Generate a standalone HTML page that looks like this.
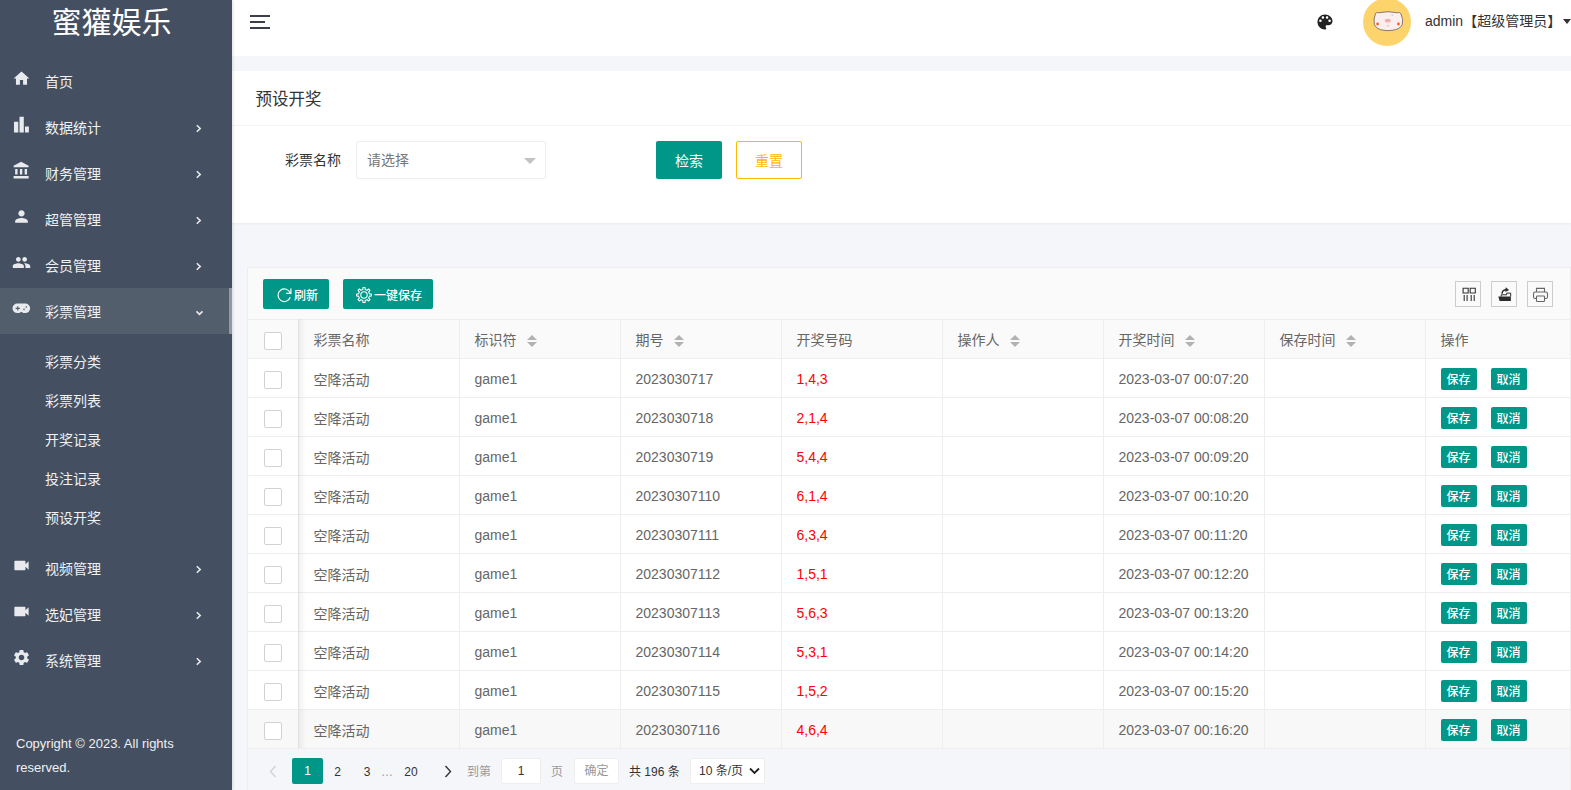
<!DOCTYPE html>
<html lang="zh-CN">
<head>
<meta charset="utf-8">
<title>预设开奖</title>
<style>
*{box-sizing:border-box;margin:0;padding:0}
html,body{width:1571px;height:790px;overflow:hidden}
body{font-family:"Liberation Sans","Noto Sans CJK SC",sans-serif;font-size:14px;color:#666;background:#f5f6fa;position:relative}
.abs{position:absolute}
/* sidebar */
#side{position:absolute;left:0;top:0;width:232px;height:790px;background:#445061;color:#fff;box-shadow:1px 0 3px rgba(0,0,0,.12);z-index:5}
#logo{position:absolute;left:0;top:3px;width:223px;height:44px;line-height:40px;text-align:center;font-size:30px;font-weight:400;color:#fff;letter-spacing:0}
.mi{position:absolute;left:0;width:232px;height:46px;line-height:46px;color:#f0f1f3;font-size:14px}
.mi .t{position:absolute;left:45px;top:1px}
.mi svg.ic{position:absolute;left:12px;top:10.6px;width:19px;height:19px;fill:#e8eaed}
#thumb{position:absolute;left:229px;top:288px;width:3px;height:46px;background:#9099a5}
.mi svg.ar{position:absolute;left:195px;top:20px;width:8px;height:9px}
.mi.on{background:#535e6d;width:229px}
.sub{position:absolute;left:45px;height:39px;line-height:39px;color:#f0f1f3;font-size:14px}
#copy{position:absolute;left:16px;top:732px;width:200px;color:#f0f1f3;font-size:13px;line-height:23.500px}
/* header */
#hd{position:absolute;left:232px;top:0;width:1339px;height:56px;background:#fff}
/* card */
#card{position:absolute;left:232px;top:71px;width:1339px;height:152px;background:#fff;box-shadow:0 1px 2px 0 rgba(0,0,0,.05)}
#ctitle{position:absolute;left:23.500px;top:14px;font-size:16.500px;color:#333;line-height:28px}
#cline{position:absolute;left:0;top:54px;width:1339px;height:1px;background:#f4f4f4}
.btn{position:absolute;height:38px;line-height:40px;text-align:center;font-size:14px;border-radius:2px;color:#fff;background:#009688}
/* table */
#tb{position:absolute;left:247px;top:267px;width:1324px;height:524px;background:#fafafa;border:1px solid #eee;overflow:hidden}
.sbtn{position:absolute;top:11px;height:30px;line-height:30px;color:#fff;background:#009688;border-radius:2px;font-size:12px;font-weight:500}
.tool{position:absolute;top:13px;width:26px;height:26px}
.tool svg{position:absolute;left:0;top:0;width:26px;height:26px}
table{border-collapse:collapse;position:absolute;left:0;top:51px;table-layout:fixed;width:1323px;background:#fff}
th,td{height:39px;border:1px solid #eee;padding:0 15px;text-align:left;font-weight:400;font-size:14px;color:#666;white-space:nowrap;overflow:hidden}
th{background:#fafafa}
th:first-child,td:first-child{border-left:none;padding:0}
th:last-child,td:last-child{border-right:none}
td{padding-top:1px}
td.r{color:#f00}
.cb{display:block;width:18px;height:18px;border:1px solid #d2d2d2;border-radius:2px;background:#fff;margin-left:16px;position:relative;top:1.500px}
.so{display:inline-block;position:relative;width:10px;height:14px;margin-left:10px;vertical-align:-3px}
.so:before{content:"";position:absolute;left:0;top:1px;border:5px solid transparent;border-top:none;border-bottom:5px solid #b2b2b2}
.so:after{content:"";position:absolute;left:0;top:8px;border:5px solid transparent;border-bottom:none;border-top:5px solid #b2b2b2}
.ob{font-weight:500;display:inline-block;height:22px;line-height:24px;padding:0 6px;background:#009688;color:#fff;font-size:12px;border-radius:2px;margin-right:14px;vertical-align:middle;position:relative;top:.5px}
tr.hv td{background:#f8f8f8}
.shl{position:absolute;left:50px;top:51px;width:8px;height:429px;background:linear-gradient(to right,rgba(0,0,0,.06),rgba(0,0,0,0))}
.shr{position:absolute;left:1169px;top:51px;width:8px;height:429px;background:linear-gradient(to left,rgba(0,0,0,.06),rgba(0,0,0,0))}
/* pager */
#pg{position:absolute;left:0;top:481px;width:1324px;height:42px;font-size:12px;color:#333;background:#f5f6fa}
#pg .p{position:absolute;top:10px;height:26px;line-height:26px;text-align:center}
</style>
</head>
<body>
<div id="side">
  <div id="logo">蜜獾娱乐</div>
  <div class="mi" style="top:58px"><svg class="ic" viewBox="0 0 24 24"><path d="M10 20v-6h4v6h5v-8h3L12 3 2 12h3v8z"/></svg><span class="t">首页</span></div>
  <div class="mi" style="top:104px"><svg class="ic" viewBox="0 0 24 24"><path d="M2.500 8.400h5.400V22H2.500zM9.500 2.300h5.400V22H9.500zM16.400 14.400h4.900V22h-4.900z"/></svg><span class="t">数据统计</span><svg class="ar" viewBox="0 0 8 9"><path d="M1.800 1.200 5.200 4.500 1.800 7.800" fill="none" stroke="#e8eaed" stroke-width="1.600"/></svg></div>
  <div class="mi" style="top:150px"><svg class="ic" viewBox="0 0 24 24"><path d="M4 10v7h3v-7H4zm6 0v7h3v-7h-3zM2 22h19v-3H2v3zm14-12v7h3v-7h-3zm-4.500-9L2 6v2h19V6l-9.500-5z"/></svg><span class="t">财务管理</span><svg class="ar" viewBox="0 0 8 9"><path d="M1.800 1.200 5.200 4.500 1.800 7.800" fill="none" stroke="#e8eaed" stroke-width="1.600"/></svg></div>
  <div class="mi" style="top:196px"><svg class="ic" viewBox="0 0 24 24"><path d="M12 12c2.210 0 4-1.790 4-4s-1.790-4-4-4-4 1.790-4 4 1.790 4 4 4zm0 2c-2.670 0-8 1.340-8 4v2h16v-2c0-2.660-5.330-4-8-4z"/></svg><span class="t">超管管理</span><svg class="ar" viewBox="0 0 8 9"><path d="M1.800 1.200 5.200 4.500 1.800 7.800" fill="none" stroke="#e8eaed" stroke-width="1.600"/></svg></div>
  <div class="mi" style="top:242px"><svg class="ic" viewBox="0 0 24 24"><path d="M16 11c1.660 0 2.990-1.340 2.990-3S17.660 5 16 5c-1.660 0-3 1.340-3 3s1.340 3 3 3zm-8 0c1.660 0 2.990-1.340 2.990-3S9.660 5 8 5C6.340 5 5 6.340 5 8s1.340 3 3 3zm0 2c-2.330 0-7 1.170-7 3.500V19h14v-2.500c0-2.330-4.670-3.500-7-3.500zm8 0c-.290 0-.620.020-.970.050 1.160.840 1.970 1.970 1.970 3.450V19h6v-2.500c0-2.330-4.670-3.500-7-3.500z"/></svg><span class="t">会员管理</span><svg class="ar" viewBox="0 0 8 9"><path d="M1.800 1.200 5.200 4.500 1.800 7.800" fill="none" stroke="#e8eaed" stroke-width="1.600"/></svg></div>
  <div class="mi on" style="top:288px"><svg class="ic" viewBox="0 0 24 24"><path fill-rule="evenodd" d="M6.600 5.800H16.900A6 6 0 0 1 16.900 17.800H14.300Q11.800 14.800 9.300 17.800H6.600A6 6 0 0 1 6.600 5.800zM6.550 9.300h1.400v1.900h2v1.400h-2v1.900h-1.400v-1.900h-2v-1.400h2zM15.200 12a1.050 1.050 0 1 0 0 2.100 1.050 1.050 0 1 0 0-2.100zM18.100 9.100a1.050 1.050 0 1 0 0 2.100 1.050 1.050 0 1 0 0-2.100z"/></svg><span class="t">彩票管理</span><svg class="ar" style="left:195px;top:21px;width:9px;height:7px" viewBox="0 0 9 7"><path d="M1.500 2.400 4.500 5.400 7.500 2.400" fill="none" stroke="#e8eaed" stroke-width="1.600"/></svg></div>
  <div class="mi" style="top:545px"><svg class="ic" viewBox="0 0 24 24"><path d="M17 10.500V7c0-.550-.450-1-1-1H4c-.550 0-1 .450-1 1v10c0 .550.450 1 1 1h12c.550 0 1-.450 1-1v-3.500l4 4v-11l-4 4z"/></svg><span class="t">视频管理</span><svg class="ar" viewBox="0 0 8 9"><path d="M1.800 1.200 5.200 4.500 1.800 7.800" fill="none" stroke="#e8eaed" stroke-width="1.600"/></svg></div>
  <div class="mi" style="top:591px"><svg class="ic" viewBox="0 0 24 24"><path d="M17 10.500V7c0-.550-.450-1-1-1H4c-.550 0-1 .450-1 1v10c0 .550.450 1 1 1h12c.550 0 1-.450 1-1v-3.500l4 4v-11l-4 4z"/></svg><span class="t">选妃管理</span><svg class="ar" viewBox="0 0 8 9"><path d="M1.800 1.200 5.200 4.500 1.800 7.800" fill="none" stroke="#e8eaed" stroke-width="1.600"/></svg></div>
  <div class="mi" style="top:637px"><svg class="ic" viewBox="0 0 24 24"><path d="M19.140 12.940c.040-.300.060-.610.060-.940 0-.320-.020-.640-.070-.940l2.030-1.580c.180-.140.230-.410.120-.610l-1.920-3.320c-.120-.220-.370-.290-.590-.220l-2.390.960c-.500-.380-1.030-.700-1.620-.940l-.360-2.540c-.040-.240-.240-.410-.480-.410h-3.840c-.240 0-.430.170-.470.410l-.360 2.540c-.590.240-1.130.570-1.620.940l-2.390-.960c-.220-.080-.470 0-.590.220L2.740 8.870c-.120.210-.080.470.120.610l2.030 1.580c-.050.300-.090.630-.090.940s.020.640.070.940l-2.030 1.580c-.180.140-.230.410-.120.610l1.920 3.320c.120.220.370.290.590.220l2.390-.960c.500.380 1.030.700 1.620.940l.360 2.540c.050.240.240.410.480.410h3.840c.240 0 .440-.170.470-.410l.360-2.540c.590-.240 1.130-.560 1.620-.940l2.390.960c.220.080.470 0 .590-.220l1.920-3.320c.120-.220.070-.470-.120-.610l-2.010-1.580zM12 15.600c-1.980 0-3.600-1.620-3.600-3.600s1.620-3.600 3.600-3.600 3.600 1.620 3.600 3.600-1.620 3.600-3.600 3.600z"/></svg><span class="t">系统管理</span><svg class="ar" viewBox="0 0 8 9"><path d="M1.800 1.200 5.200 4.500 1.800 7.800" fill="none" stroke="#e8eaed" stroke-width="1.600"/></svg></div>
  <div class="sub" style="top:343px">彩票分类</div>
  <div class="sub" style="top:382px">彩票列表</div>
  <div class="sub" style="top:421px">开奖记录</div>
  <div class="sub" style="top:460px">投注记录</div>
  <div class="sub" style="top:499px">预设开奖</div>
  <div id="thumb"></div>
  <div id="copy">Copyright © 2023. All rights reserved.</div>
</div>
<div id="hd">
  <svg class="abs" style="left:18px;top:14px;width:20px;height:16px" viewBox="0 0 20 16"><path d="M0 2h20M0 8h15M0 14h20" stroke="#3a3f4a" stroke-width="2" fill="none"/></svg>
  <svg class="abs" style="left:1083px;top:12px;width:20px;height:20px" viewBox="0 0 24 24"><path fill="#222" d="M12 3c-4.970 0-9 4.030-9 9s4.030 9 9 9c.830 0 1.500-.670 1.500-1.500 0-.390-.150-.740-.390-1.010-.230-.260-.380-.610-.380-.990 0-.830.670-1.500 1.500-1.500H16c2.760 0 5-2.240 5-5 0-4.420-4.030-8-9-8zm-5.500 9c-.830 0-1.500-.670-1.500-1.500S5.670 9 6.500 9 8 9.670 8 10.500 7.330 12 6.500 12zm3-4C8.670 8 8 7.330 8 6.500S8.670 5 9.500 5s1.500.670 1.500 1.500S10.330 8 9.500 8zm5 0c-.830 0-1.500-.670-1.500-1.500S13.670 5 14.500 5s1.500.670 1.500 1.500S15.330 8 14.500 8zm3 4c-.830 0-1.500-.670-1.500-1.500S16.670 9 17.500 9s1.500.670 1.500 1.500-.670 1.500-1.500 1.500z"/></svg>
  <div class="abs" id="av" style="left:1131px;top:-2px;width:48px;height:48px;border-radius:50%;background:#fdd46c;overflow:hidden">
    <svg style="position:absolute;left:8.500px;top:13px;width:32px;height:21px" viewBox="0 0 32 21"><path d="M3.500 2.500Q4.500 .8 6.600 1.800Q16 -.4 25.500 1.800Q28 .8 29 2.800Q31.600 9 30.300 13.500Q28 18.500 20 19.300Q16 20 12 19.300Q4.500 18.500 2.300 13.500Q1.400 8 3.500 2.500z" fill="#fbeeee" stroke="#5c4a48" stroke-width=".7"/><circle cx="5.600" cy="13" r="1.400" fill="#ff5a2a"/><circle cx="26.400" cy="13" r="1.400" fill="#ff5a2a"/><ellipse cx="15.800" cy="9.700" rx="3" ry="1.900" fill="#f4b3b3"/><path d="M14.300 9.300h1M16.500 9.300h1" stroke="#c98" stroke-width=".7"/><path d="M15.300 14.500q.6 1.600 1 0" stroke="#8a7472" stroke-width=".6" fill="none"/><path d="M20.200 3.600v1.200" stroke="#8a7472" stroke-width=".5"/></svg>
  </div>
  <div class="abs" style="left:1193px;top:10px;line-height:22px;font-size:14px;color:#333;white-space:nowrap">admin【超级管理员】</div>
  <div class="abs" style="left:1331px;top:19px;width:0;height:0;border:4px solid transparent;border-top:5px solid #333;border-bottom:none"></div>
</div>
<div id="card">
  <div id="ctitle">预设开奖</div>
  <div id="cline"></div>
  <div class="abs" style="left:53px;top:70px;line-height:38px;color:#333;font-size:14px">彩票名称</div>
  <div class="abs" style="left:124px;top:70px;width:190px;height:38px;border:1px solid #eee;border-radius:2px;line-height:36px;padding-left:10px;color:#777;font-size:14px">请选择<span class="abs" style="right:9px;top:16px;width:0;height:0;border:6px solid transparent;border-top:6px solid #c2c2c2;border-bottom:none"></span></div>
  <div class="btn" style="left:424px;top:70px;width:66px">检索</div>
  <div class="btn" style="left:504px;top:70px;width:66px;background:#fff;border:1px solid #ffb800;color:#ffb800;line-height:38px">重置</div>
</div>
<div id="tb">
<div class="sbtn" style="left:15px;width:66px"><svg class="abs" style="left:13px;top:8px;width:16px;height:16px" viewBox="0 0 16 16"><path d="M14.300 6.300A6.300 6.300 0 1 0 14.300 10.300" fill="none" stroke="#fff" stroke-width="1.200"/><path d="M14.900 1.600v4.700h-4.700" fill="none" stroke="#fff" stroke-width="1.200"/></svg><span class="abs" style="left:31px;top:1.500px">刷新</span></div>
<div class="sbtn" style="left:95px;width:90px"><svg class="abs" style="left:13px;top:8px;width:16px;height:16px" viewBox="0 0 16 16"><path d="M6.86 2.52 L6.94 0.57 L9.06 0.57 L9.14 2.52 L11.07 3.32 L12.50 2.00 L14.00 3.50 L12.68 4.93 L13.48 6.86 L15.43 6.94 L15.43 9.06 L13.48 9.14 L12.68 11.07 L14.00 12.50 L12.50 14.00 L11.07 12.68 L9.14 13.48 L9.06 15.43 L6.94 15.43 L6.86 13.48 L4.93 12.68 L3.50 14.00 L2.00 12.50 L3.32 11.07 L2.52 9.14 L0.57 9.06 L0.57 6.94 L2.52 6.86 L3.32 4.93 L2.00 3.50 L3.50 2.00 L4.93 3.32z" fill="none" stroke="#fff" stroke-width="1.100" stroke-linejoin="round"/><circle cx="8" cy="8" r="3.200" fill="none" stroke="#fff" stroke-width="1.100"/></svg><span class="abs" style="left:31px;top:1.500px">一键保存</span></div>
<div class="tool" style="left:1207px"><svg viewBox="0 0 26 26"><rect x=".5" y=".5" width="25" height="25" fill="none" stroke="#ccc"/><path d="M8.100 7.300h5.100v4.700H8.100zM15.200 7.300h5.100v4.700h-5.100z" fill="none" stroke="#333" stroke-width="1.100"/><path d="M9.200 13.900v6M12.100 13.900v6M16.200 13.900v6M19.200 13.900v6" stroke="#333" stroke-width="1.100"/></svg></div>
<div class="tool" style="left:1243px"><svg viewBox="0 0 26 26"><rect x=".5" y=".5" width="25" height="25" fill="none" stroke="#ccc"/><path d="M7.300 15.600h12.600v4.300H8.600z" fill="#2b2b2b"/><path d="M10.200 15.600v-1.800h5.500v-1.700h4v3.500" fill="none" stroke="#2b2b2b" stroke-width="1"/><path d="M11 12.700c.2-2.800 2-4 4.300-4" fill="none" stroke="#2b2b2b" stroke-width="1.500"/><path d="M14.600 6.200l3.500 2.700-3.700 2z" fill="#2b2b2b"/></svg></div>
<div class="tool" style="left:1279px"><svg viewBox="0 0 26 26"><rect x=".5" y=".5" width="25" height="25" fill="none" stroke="#ccc"/><path d="M9.500 11V7.400h8V11M9.500 17.500H8.300a1.800 1.800 0 0 1-1.800-1.800v-2.900a1.800 1.800 0 0 1 1.800-1.800h10.400a1.800 1.800 0 0 1 1.800 1.800v2.900a1.800 1.800 0 0 1-1.800 1.800H17.500" fill="none" stroke="#666" stroke-width="1.100"/><rect x="9.500" y="15" width="8" height="5.500" rx=".8" fill="none" stroke="#666" stroke-width="1.100"/></svg></div>
<table><colgroup><col style="width:50px"><col style="width:161px"><col style="width:161px"><col style="width:161px"><col style="width:161px"><col style="width:161px"><col style="width:161px"><col style="width:161px"><col></colgroup>
<tr><th><span class="cb"></span></th><th>彩票名称</th><th>标识符<span class="so"></span></th><th>期号<span class="so"></span></th><th>开奖号码</th><th>操作人<span class="so"></span></th><th>开奖时间<span class="so"></span></th><th>保存时间<span class="so"></span></th><th>操作</th></tr>
<tr><td><span class="cb"></span></td><td>空降活动</td><td>game1</td><td>2023030717</td><td class="r">1,4,3</td><td></td><td>2023-03-07 00:07:20</td><td></td><td><span class="ob">保存</span><span class="ob">取消</span></td></tr>
<tr><td><span class="cb"></span></td><td>空降活动</td><td>game1</td><td>2023030718</td><td class="r">2,1,4</td><td></td><td>2023-03-07 00:08:20</td><td></td><td><span class="ob">保存</span><span class="ob">取消</span></td></tr>
<tr><td><span class="cb"></span></td><td>空降活动</td><td>game1</td><td>2023030719</td><td class="r">5,4,4</td><td></td><td>2023-03-07 00:09:20</td><td></td><td><span class="ob">保存</span><span class="ob">取消</span></td></tr>
<tr><td><span class="cb"></span></td><td>空降活动</td><td>game1</td><td>20230307110</td><td class="r">6,1,4</td><td></td><td>2023-03-07 00:10:20</td><td></td><td><span class="ob">保存</span><span class="ob">取消</span></td></tr>
<tr><td><span class="cb"></span></td><td>空降活动</td><td>game1</td><td>20230307111</td><td class="r">6,3,4</td><td></td><td>2023-03-07 00:11:20</td><td></td><td><span class="ob">保存</span><span class="ob">取消</span></td></tr>
<tr><td><span class="cb"></span></td><td>空降活动</td><td>game1</td><td>20230307112</td><td class="r">1,5,1</td><td></td><td>2023-03-07 00:12:20</td><td></td><td><span class="ob">保存</span><span class="ob">取消</span></td></tr>
<tr><td><span class="cb"></span></td><td>空降活动</td><td>game1</td><td>20230307113</td><td class="r">5,6,3</td><td></td><td>2023-03-07 00:13:20</td><td></td><td><span class="ob">保存</span><span class="ob">取消</span></td></tr>
<tr><td><span class="cb"></span></td><td>空降活动</td><td>game1</td><td>20230307114</td><td class="r">5,3,1</td><td></td><td>2023-03-07 00:14:20</td><td></td><td><span class="ob">保存</span><span class="ob">取消</span></td></tr>
<tr><td><span class="cb"></span></td><td>空降活动</td><td>game1</td><td>20230307115</td><td class="r">1,5,2</td><td></td><td>2023-03-07 00:15:20</td><td></td><td><span class="ob">保存</span><span class="ob">取消</span></td></tr>
<tr class="hv"><td><span class="cb"></span></td><td>空降活动</td><td>game1</td><td>20230307116</td><td class="r">4,6,4</td><td></td><td>2023-03-07 00:16:20</td><td></td><td><span class="ob">保存</span><span class="ob">取消</span></td></tr>
</table>
<div class="shl"></div>
<div id="pg">
<svg class="abs" style="left:21px;top:16px;width:8px;height:13px" viewBox="0 0 8 13"><path d="M6.500 1 1.500 6.500 6.500 12" fill="none" stroke="#d2d2d2" stroke-width="1.400"/></svg>
<div class="p" style="left:44px;top:9px;width:31px;background:#009688;color:#fff;border-radius:2px">1</div>
<div class="p" style="left:75px;width:29px">2</div>
<div class="p" style="left:104px;width:30px">3</div>
<div class="p" style="left:132px;width:14px;color:#999">…</div>
<div class="p" style="left:148px;width:30px">20</div>
<svg class="abs" style="left:196px;top:16px;width:8px;height:13px" viewBox="0 0 8 13"><path d="M1.500 1 6.500 6.500 1.500 12" fill="none" stroke="#333" stroke-width="1.400"/></svg>
<div class="p" style="left:219px;color:#999">到第</div>
<div class="p" style="left:253px;top:9px;width:40px;height:26px;line-height:25px;border:1px solid #eee;background:#fff;border-radius:2px;color:#333">1</div>
<div class="p" style="left:303px;color:#999">页</div>
<div class="p" style="left:326px;top:9px;width:45px;height:26px;line-height:25px;border:1px solid #eee;background:#fff;border-radius:2px;color:#999">确定</div>
<div class="p" style="left:381px;color:#333">共 196 条</div>
<div class="p" style="left:442px;top:9px;width:75px;height:26px;line-height:25px;border:1px solid #eee;background:#fff;border-radius:2px;color:#333;text-align:left;padding-left:8px">10 条/页<svg class="abs" style="left:58px;top:8px;width:11px;height:8px" viewBox="0 0 11 8"><path d="M1 1.500 5.500 6 10 1.500" fill="none" stroke="#222" stroke-width="1.800"/></svg></div>
</div>
</div>
</body>
</html>
